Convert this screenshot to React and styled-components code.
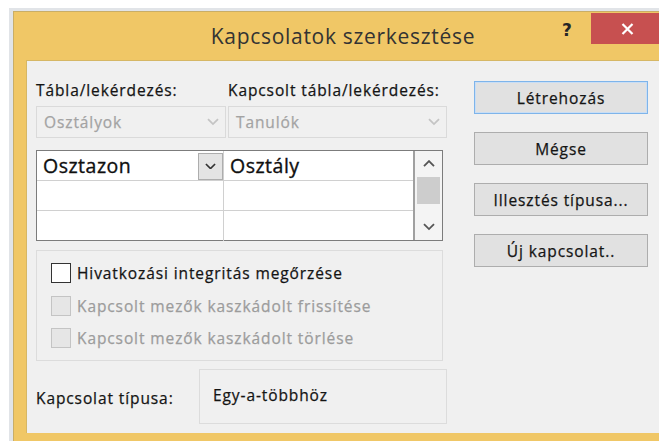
import React from 'react';
import styled, { createGlobalStyle } from 'styled-components';

const GlobalStyle = createGlobalStyle`
  html, body {
    margin: 0;
    padding: 0;
    background: #ffffff;
    overflow: hidden;
  }
  body {
    font-family: "Open Sans", "Noto Sans", sans-serif;
    color: #141414;
  }
`;

// shared look of the dialog's small UI text
const uiText = `
  font-size: 15.5px;
  font-weight: 400;
  letter-spacing: 0.9px;
  -webkit-text-stroke: 0.25px currentColor;
`;

const Page = styled.div`
  width: 659px;
  height: 441px;
  padding: 8px 0 0 9px;
  box-sizing: border-box;
  overflow: hidden;
`;

const Shadow = styled.div`
  border-top: 3px solid #e1e4e8;
  border-left: 4px solid #e1e4e8;
  height: 100%;
`;

const Frame = styled.div`
  display: flex;
  flex-direction: column;
  height: 100%;
  background: #f0c766;
  border-top: 1px solid #c9ae67;
  border-left: 1px solid #c9ae67;
  padding: 0 2px 0 12px;
  box-sizing: border-box;
  width: 650px;
`;

const TitleBar = styled.div`
  display: flex;
  align-items: flex-start;
  height: 48px;
  flex-shrink: 0;
`;

const Title = styled.div`
  flex: 1;
  text-align: center;
  padding: 10px 0 0 98px;
  font-size: 21px;
  letter-spacing: 0.7px;
  color: #333333;
`;

const HelpMark = styled.div`
  width: 10px;
  margin: 10px 19px 0 0;
  font-family: "DejaVu Sans", sans-serif;
  font-weight: bold;
  font-size: 17px;
  line-height: 1;
  color: #262626;
`;

const CloseButton = styled.div`
  display: flex;
  align-items: center;
  justify-content: center;
  width: 72px;
  height: 31px;
  margin: 1px -2px 0 0;
  background: #c75050;
`;

const Content = styled.div`
  display: flex;
  gap: 27px;
  height: 373px;
  padding: 19px 0 0 9px;
  background: #f0f0f0;
  border-top: 1px solid #d6b765;
  border-left: 1px solid #d6b765;
  box-sizing: border-box;
`;

const LeftColumn = styled.div`
  display: flex;
  flex-direction: column;
  width: 411px;
`;

const FieldGrid = styled.div`
  display: grid;
  grid-template-columns: 190px 1fr;
  column-gap: 2px;
`;

const FieldLabel = styled.div`
  height: 26px;
  line-height: 20px;
  ${uiText}
  white-space: nowrap;
`;

const Combo = styled.div`
  display: flex;
  align-items: center;
  justify-content: space-between;
  height: 32px;
  padding: 0 6px 0 7px;
  border: 1px solid #dadada;
  box-sizing: border-box;
  ${uiText}
  color: #a3a3a3;
`;

const Table = styled.div`
  display: flex;
  width: 407px;
  height: 91px;
  margin-top: 12px;
  border: 1px solid #7c7c7c;
  box-sizing: border-box;
  background: #ffffff;
`;

const Grid = styled.div`
  flex: 1;
  display: grid;
  grid-template-columns: 187px 1fr;
  grid-auto-rows: 30px;
  border-right: 2px solid #a0a0a0;
`;

const Cell = styled.div`
  display: flex;
  align-items: center;
  justify-content: space-between;
  padding-left: 6px;
  font-size: 19.5px;
  letter-spacing: 0.5px;
  -webkit-text-stroke: 0.35px currentColor;
  color: #0f0f0f;
  border-right: ${(p) => (p.$first ? '1px solid #d0d0d0' : 'none')};
  border-bottom: ${(p) => (p.$last ? 'none' : '1px solid #d0d0d0')};
`;

const CellDrop = styled.div`
  display: flex;
  align-items: center;
  justify-content: center;
  width: 25px;
  height: 27px;
  margin-top: 1px;
  background: #e4e4e4;
  border: 1px solid #adadad;
  box-sizing: border-box;
`;

const ScrollBar = styled.div`
  display: flex;
  flex-direction: column;
  align-items: center;
  width: 27px;
  background: #f4f4f4;
`;

const ScrollArrow = styled.div`
  display: flex;
  align-items: center;
  justify-content: center;
  height: 26px;
  width: 100%;
`;

const ScrollThumb = styled.div`
  width: 23px;
  height: 27px;
  background: #cdcdcd;
`;

const ScrollTrack = styled.div`
  flex: 1;
`;

const OptionGroup = styled.div`
  display: flex;
  flex-direction: column;
  width: 407px;
  height: 111px;
  margin-top: 9px;
  padding: 6px 0 0 14px;
  border: 1px solid #dcdcdc;
  box-sizing: border-box;
`;

const OptionRow = styled.label`
  display: flex;
  align-items: center;
  gap: 6px;
  height: 32.5px;
  ${uiText}
  color: ${(p) => (p.$disabled ? '#9c9c9c' : '#141414')};
`;

const CheckBox = styled.span`
  width: 20px;
  height: 20px;
  flex-shrink: 0;
  box-sizing: border-box;
  border: 1px solid ${(p) => (p.$disabled ? '#c4c4c4' : '#333333')};
  background: ${(p) => (p.$disabled ? '#e6e6e6' : '#ffffff')};
`;

const TypeRow = styled.div`
  display: flex;
  align-items: center;
  margin-top: 8px;
  height: 55px;
`;

const TypeLabel = styled.div`
  width: 163px;
  padding-top: 2px;
  ${uiText}
`;

const TypeBox = styled.div`
  display: flex;
  align-items: center;
  width: 248px;
  height: 55px;
  padding: 0 0 4px 13px;
  box-sizing: border-box;
  border: 1px solid #dcdcdc;
  ${uiText}
`;

const ButtonColumn = styled.div`
  display: flex;
  flex-direction: column;
  gap: 18px;
  width: 174px;
  padding-top: 1px;
`;

const Button = styled.div`
  display: flex;
  align-items: center;
  justify-content: center;
  height: 33px;
  background: #e1e1e1;
  border: 1px solid ${(p) => (p.$default ? '#7eb4ea' : '#adadad')};
  box-shadow: ${(p) => (p.$default ? 'inset 0 0 0 1px #c9def5' : 'none')};
  box-sizing: border-box;
  ${uiText}
`;

const Chevron = ({ dir = 'down', color = '#444', size = 12 }) => (
  <svg width={size} height={size * 0.6} viewBox="0 0 12 7">
    <polyline
      points={dir === 'down' ? '1,1 6,6 11,1' : '1,6 6,1 11,6'}
      fill="none"
      stroke={color}
      strokeWidth="1.8"
    />
  </svg>
);

const CloseGlyph = () => (
  <svg width="13" height="12" viewBox="0 0 13 12">
    <path d="M1.5 1 L11.5 11 M11.5 1 L1.5 11" stroke="#ffffff" strokeWidth="2.2" />
  </svg>
);

const options = [
  { text: 'Hivatkozási integritás megőrzése', disabled: false },
  { text: 'Kapcsolt mezők kaszkádolt frissítése', disabled: true },
  { text: 'Kapcsolt mezők kaszkádolt törlése', disabled: true },
];

const rows = [
  ['Osztazon', 'Osztály'],
  ['', ''],
  ['', ''],
];

export default function App() {
  return (
    <Page>
      <GlobalStyle />
      <Shadow>
        <Frame>
          <TitleBar>
            <Title>Kapcsolatok szerkesztése</Title>
            <HelpMark>?</HelpMark>
            <CloseButton>
              <CloseGlyph />
            </CloseButton>
          </TitleBar>
          <Content>
            <LeftColumn>
              <FieldGrid>
                <FieldLabel>Tábla/lekérdezés:</FieldLabel>
                <FieldLabel>Kapcsolt tábla/lekérdezés:</FieldLabel>
                <Combo>
                  Osztályok
                  <Chevron color="#c4c4c4" />
                </Combo>
                <Combo>
                  Tanulók
                  <Chevron color="#c4c4c4" />
                </Combo>
              </FieldGrid>

              <Table>
                <Grid>
                  {rows.map((row, i) => (
                    <React.Fragment key={i}>
                      <Cell $first $last={i === rows.length - 1}>
                        {row[0]}
                        {i === 0 && (
                          <CellDrop>
                            <Chevron color="#333" size={11} />
                          </CellDrop>
                        )}
                      </Cell>
                      <Cell $last={i === rows.length - 1}>{row[1]}</Cell>
                    </React.Fragment>
                  ))}
                </Grid>
                <ScrollBar>
                  <ScrollArrow>
                    <Chevron dir="up" color="#555" />
                  </ScrollArrow>
                  <ScrollThumb />
                  <ScrollTrack />
                  <ScrollArrow>
                    <Chevron color="#555" />
                  </ScrollArrow>
                </ScrollBar>
              </Table>

              <OptionGroup>
                {options.map((o) => (
                  <OptionRow key={o.text} $disabled={o.disabled}>
                    <CheckBox $disabled={o.disabled} />
                    {o.text}
                  </OptionRow>
                ))}
              </OptionGroup>

              <TypeRow>
                <TypeLabel>Kapcsolat típusa:</TypeLabel>
                <TypeBox>Egy-a-többhöz</TypeBox>
              </TypeRow>
            </LeftColumn>

            <ButtonColumn>
              <Button $default>Létrehozás</Button>
              <Button>Mégse</Button>
              <Button>Illesztés típusa...</Button>
              <Button>Új kapcsolat..</Button>
            </ButtonColumn>
          </Content>
        </Frame>
      </Shadow>
    </Page>
  );
}
